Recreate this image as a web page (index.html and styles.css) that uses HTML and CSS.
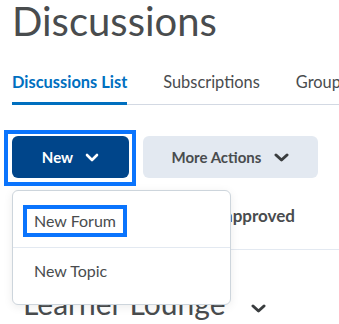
FILE: index.html
```html
<!DOCTYPE html>
<html lang="en">
<head>
    <meta charset="UTF-8">
    <title>Discussions</title>
    <link rel="stylesheet" href="styles.css">
</head>
<body>
<div class="page">
    <h1 class="page-title">Discussions</h1>

    <nav class="tabs">
        <a class="tab tab-active">Discussions List</a>
        <a class="tab">Subscriptions</a>
        <a class="tab">Group</a>
    </nav>

    <div class="toolbar">
        <div class="dropdown">
            <span class="focus-ring">
                <button class="btn btn-primary">New
                    <svg class="chevron" width="14" height="9" viewBox="0 0 14 9"><polyline points="2,2 7,7 12,2" /></svg>
                </button>
            </span>
            <ul class="menu">
                <li class="menu-item"><span class="menu-label is-focused">New Forum</span></li>
                <li class="menu-item"><span class="menu-label">New Topic</span></li>
            </ul>
        </div>
        <button class="btn btn-secondary">More Actions
            <svg class="chevron" width="15" height="9" viewBox="0 0 15 9"><polyline points="2,2 7.5,7 13,2" /></svg>
        </button>
    </div>

    <div class="filter-row">
        <span class="filter">Unapproved</span>
    </div>

    <h2 class="forum-title">Learner Lounge
        <svg class="chevron" width="15" height="9" viewBox="0 0 15 9"><polyline points="2,2 7.5,7 13,2" /></svg>
    </h2>
</div>
</body>
</html>
```

FILE: styles.css
```css
:root {
    --focus: #0a74fd;
    --text: #494c4e;
    --primary: #00458a;
    --link: #006fbf;
    --line: #d3d9e3;
}
* {
    box-sizing: border-box;
}
body {
    margin: 0;
    font-family: 'Lato', sans-serif;
    color: var(--text);
    background: #fff;
    overflow: hidden;
}
.page {
    padding-left: 12px;
}
.page-title {
    font-size: 40px;
    font-weight: 400;
    line-height: 43px;
    margin: 0;
}
.tabs {
    display: flex;
    gap: 36px;
    margin-top: 29px;
    border-bottom: 1px solid var(--line);
    white-space: nowrap;
}
.tab {
    font-size: 16.4px;
    line-height: 20px;
    padding-bottom: 10px;
    border-bottom: 3px solid transparent;
    margin-bottom: -1px;
}
.tab-active {
    color: var(--link);
    font-weight: 700;
    border-bottom-color: var(--link);
}
.toolbar {
    display: flex;
    align-items: flex-start;
    margin-top: 25px;
}
.dropdown {
    position: relative;
    margin-left: -8px;
}
.focus-ring {
    display: flex;
    border: 4px solid var(--focus);
    padding: 2px 3px 4px 4px;
}
.btn {
    display: flex;
    align-items: center;
    justify-content: center;
    gap: 12px;
    height: 42px;
    border: none;
    border-radius: 6px;
    font-family: 'Lato', sans-serif;
    font-size: 15px;
    font-weight: 700;
}
.chevron polyline {
    fill: none;
    stroke: currentColor;
    stroke-width: 2.6;
    stroke-linecap: round;
    stroke-linejoin: round;
}
.btn-primary {
    width: 117px;
    background: var(--primary);
    color: #fff;
}
.btn-secondary {
    width: 175px;
    margin: 6px 0 0 7px;
    gap: 13px;
    background: #e3e9f1;
    color: var(--text);
}
.btn-secondary .chevron {
    color: #3a3d3f;
}
.btn-secondary .chevron polyline {
    stroke-width: 3;
}
.menu {
    position: absolute;
    top: 60px;
    left: 8px;
    width: 219px;
    margin: 0;
    padding: 0 0 1px;
    list-style: none;
    background: #fff;
    border: 1px solid #cdd5dc;
    border-radius: 6px;
    box-shadow: 0 2px 10px rgba(0, 0, 0, 0.08);
    z-index: 2;
}
.menu-item {
    padding: 14px 10px 10px;
    font-size: 16px;
}
.menu-item + .menu-item {
    padding: 7px 10px 16px;
    border-top: 1px solid #e3e9f1;
}
.menu-label {
    display: inline-block;
    padding: 2px 7px;
    line-height: 20px;
    border: 4px solid transparent;
}
.menu-label.is-focused {
    border-color: var(--focus);
}
.filter-row {
    display: flex;
    justify-content: flex-end;
    margin-top: 20px;
    padding: 0 44px 23px 0;
    border-bottom: 1px solid #e3e9f1;
}
.filter {
    font-size: 17px;
    line-height: 20px;
    font-weight: 700;
}
.forum-title {
    display: flex;
    align-items: center;
    gap: 25px;
    margin: 35px 0 0 11px;
    font-size: 30px;
    line-height: 36px;
    font-weight: 400;
}
.forum-title .chevron {
    margin-top: 10px;
    color: #3a3d3f;
}
.forum-title .chevron polyline {
    stroke-width: 3;
}
```
